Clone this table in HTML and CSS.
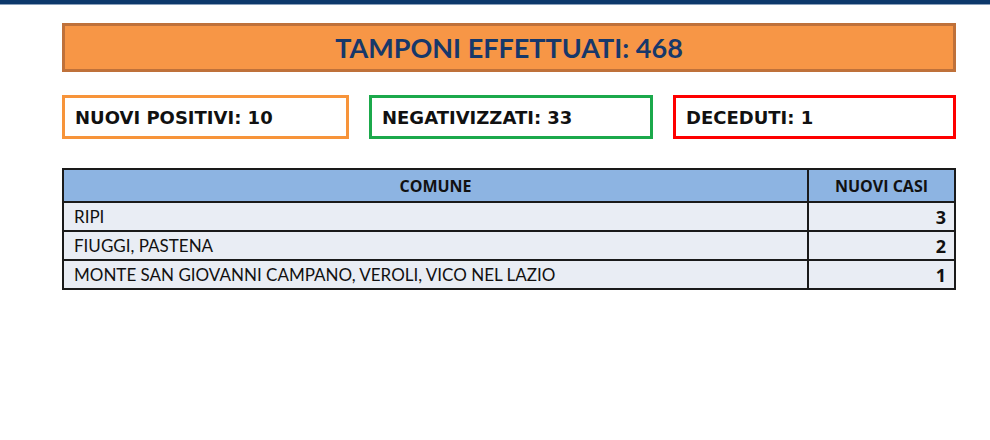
FILE: index.html
```html
<!DOCTYPE html>
<html>
<head>
<meta charset="utf-8">
<link rel="stylesheet" href="styles.css">
</head>
<body>
<div class="topbar"></div>
<main class="page">
  <div class="title-box"><span class="title">TAMPONI EFFETTUATI: 468</span></div>
  <div class="stats">
    <div class="stat stat-orange">NUOVI POSITIVI: 10</div>
    <div class="stat stat-green">NEGATIVIZZATI: 33</div>
    <div class="stat stat-red">DECEDUTI: 1</div>
  </div>
  <table class="cases">
    <thead>
      <tr><th class="col-comune">COMUNE</th><th class="col-casi">NUOVI CASI</th></tr>
    </thead>
    <tbody>
      <tr><td>RIPI</td><td class="num">3</td></tr>
      <tr><td>FIUGGI, PASTENA</td><td class="num">2</td></tr>
      <tr><td>MONTE SAN GIOVANNI CAMPANO, VEROLI, VICO NEL LAZIO</td><td class="num">1</td></tr>
    </tbody>
  </table>
</main>
</body>
</html>
```

FILE: styles.css
```css
html, body {
  margin: 0;
  padding: 0;
  background: #ffffff;
}
.topbar {
  height: 4px;
  background: #0d386b;
  border-bottom: 1px solid #8aa0bb;
}
.page {
  width: 894px;
  margin-left: 62px;
  padding-top: 18px;
}
.title-box {
  height: 43px;
  background: #f79646;
  border: 3px solid #bf713a;
  display: flex;
  align-items: center;
  justify-content: center;
}
.title {
  font-family: "Lato", "Liberation Sans", sans-serif;
  font-weight: 700;
  font-size: 27px;
  color: #17386a;
  display: inline-block;
}
.stats {
  margin-top: 23px;
  display: grid;
  grid-template-columns: 287px 284px 283px;
  column-gap: 20px;
}
.stat {
  height: 38px;
  border: 3px solid;
  display: flex;
  align-items: center;
  padding-left: 10px;
  font-family: "DejaVu Sans", "Liberation Sans", sans-serif;
  font-weight: 700;
  font-size: 18px;
  color: #111;
}
.stat-orange { border-color: #f7943a; }
.stat-green { border-color: #1ba94b; }
.stat-red { border-color: #fe0000; }
.cases {
  margin-top: 29px;
  width: 894px;
  border-collapse: collapse;
  font-family: "Lato", "Liberation Sans", sans-serif;
  font-size: 17px;
  color: #111;
}
.cases th, .cases td {
  border: 2px solid #1a1a1a;
}
.cases th {
  height: 31px;
  background: #8db4e2;
  font-family: "Open Sans", "Liberation Sans", sans-serif;
  font-weight: 700;
  font-size: 16px;
  padding: 0;
}
.col-casi { width: 145px; }
.cases td {
  height: 27px;
  background: #e9edf4;
  padding: 0 10px;
}
.cases td.num {
  text-align: right;
  font-family: "Open Sans", "Liberation Sans", sans-serif;
  font-weight: 700;
  font-size: 18px;
  padding-right: 8px;
}
```
